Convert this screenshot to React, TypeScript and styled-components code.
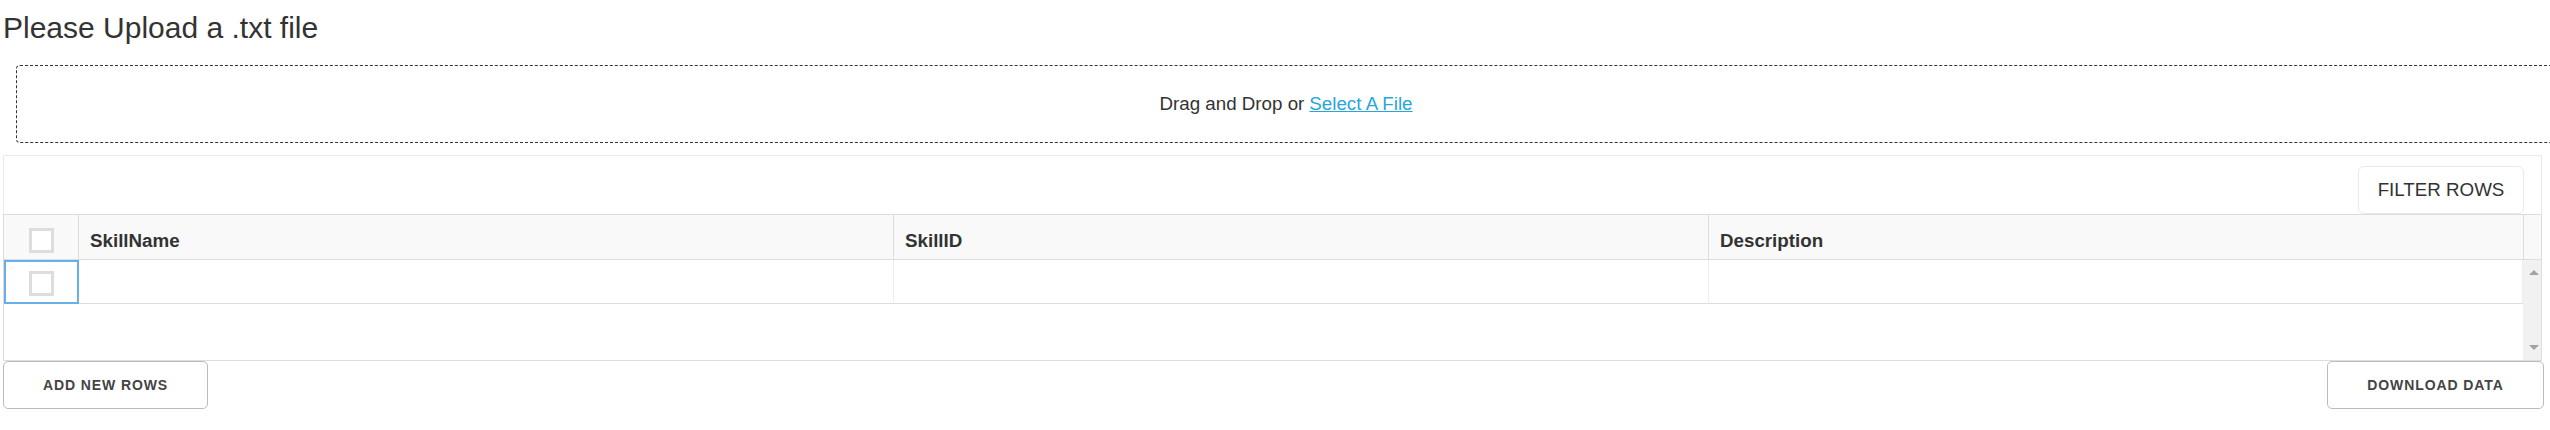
import React from 'react';
import styled, { createGlobalStyle } from 'styled-components';

const GlobalStyle = createGlobalStyle`
  html, body { margin: 0; padding: 0; background: #fff; overflow: hidden; }
  body { font-family: "Liberation Sans", Arial, sans-serif; color: #333; }
  *, *::before, *::after { box-sizing: border-box; }
`;

const Page = styled.div`
  width: 2550px;
  padding-left: 3px;
`;

const Title = styled.h1`
  margin: 0;
  padding-top: 11px;
  font-size: 30px;
  line-height: 34px;
  font-weight: 400;
  color: #333;
`;

const DropZone = styled.div`
  margin: 20px 0 0 13px;
  width: 2540px;
  height: 78px;
  border: 1px dashed #333;
  border-radius: 4px;
  display: flex;
  align-items: center;
  justify-content: center;
  font-size: 18.75px;
  color: #333;
`;

const FileLink = styled.a`
  margin-left: 5px;
  color: #27a6de;
  text-decoration: underline;
  cursor: pointer;
`;

const GridWrap = styled.div`
  margin-top: 12px;
  width: 2539px;
`;

const Toolbar = styled.div`
  display: flex;
  justify-content: flex-end;
  padding: 10px 17px 0 0;
  border: 1px solid #e7eaec;
  border-bottom: none;
`;

const ToolbarButton = styled.button`
  width: 166px;
  height: 48px;
  padding: 0;
  background: #fff;
  border: 1px solid #e7eaec;
  border-radius: 6px;
  font-family: inherit;
  font-size: 18.75px;
  color: #333;
`;

const Grid = styled.div`
  border: 1px solid #ddd;
`;

const HeaderRow = styled.div`
  display: flex;
  height: 45px;
  background: #f9f9f9;
  border-bottom: 1px solid #ddd;
`;

const HeaderCell = styled.div<{ $w?: number; $center?: boolean }>`
  flex: ${(p) => (p.$w ? `0 0 ${p.$w}px` : '1 1 auto')};
  display: flex;
  align-items: center;
  justify-content: ${(p) => (p.$center ? 'center' : 'flex-start')};
  padding: 7px 0 0 ${(p) => (p.$center ? 0 : 11)}px;
  border-right: ${(p) => (p.$w ? '1px solid #ddd' : 'none')};
  font-size: 18.75px;
  font-weight: 700;
  color: #333;
`;

const Body = styled.div`
  display: flex;
  height: 100px;
`;

const Canvas = styled.div`
  flex: 1 1 auto;
  background: #fff;
`;

const Row = styled.div`
  display: flex;
  height: 44px;
`;

const Cell = styled.div<{ $w?: number; $center?: boolean; $selected?: boolean }>`
  flex: ${(p) => (p.$w ? `0 0 ${p.$w}px` : '1 1 auto')};
  display: flex;
  align-items: center;
  justify-content: ${(p) => (p.$center ? 'center' : 'flex-start')};
  padding-top: 4px;
  border-right: 1px solid #eee;
  border-bottom: 1px solid #ddd;
  ${(p) => (p.$selected ? 'outline: 2px solid #66afe9; outline-offset: -2px;' : '')}
`;

const CheckBox = styled.span`
  display: inline-block;
  width: 25px;
  height: 25px;
  border: 3px solid #ddd;
  background: #fff;
`;

const ScrollBar = styled.div`
  flex: 0 0 18px;
  background: #f1f1f1;
  display: flex;
  flex-direction: column;
  justify-content: space-between;
  align-items: center;
  padding: 10px 0 10px 4px;
`;

const Arrow = styled.span<{ $down?: boolean }>`
  width: 0;
  height: 0;
  border-left: 5px solid transparent;
  border-right: 5px solid transparent;
  ${(p) => (p.$down ? 'border-top: 5px solid #a3a3a3;' : 'border-bottom: 5px solid #a3a3a3;')}
`;

const Footer = styled.div`
  display: flex;
  justify-content: space-between;
  width: 2541px;
`;

const ActionButton = styled.button<{ $w: number }>`
  width: ${(p) => p.$w}px;
  height: 48px;
  padding: 0;
  background: #fff;
  border: 1px solid #bbb;
  border-radius: 5px;
  font-family: inherit;
  font-size: 14px;
  font-weight: 700;
  letter-spacing: 0.9px;
  text-transform: uppercase;
  color: #444;
`;

const columns = ['SkillName', 'SkillID', 'Description'];

export default function App() {
  return (
    <Page>
      <GlobalStyle />
      <Title>Please Upload a .txt file</Title>
      <DropZone>
        Drag and Drop or<FileLink>Select A File</FileLink>
      </DropZone>
      <GridWrap>
        <Toolbar>
          <ToolbarButton>FILTER ROWS</ToolbarButton>
        </Toolbar>
        <Grid>
          <HeaderRow>
            <HeaderCell $w={75} $center>
              <CheckBox />
            </HeaderCell>
            {columns.map((c) => (
              <HeaderCell key={c} $w={815}>
                {c}
              </HeaderCell>
            ))}
            <HeaderCell />
          </HeaderRow>
          <Body>
            <Canvas>
              <Row>
                <Cell $w={75} $center $selected>
                  <CheckBox />
                </Cell>
                <Cell $w={815} />
                <Cell $w={815} />
                <Cell />
              </Row>
            </Canvas>
            <ScrollBar>
              <Arrow />
              <Arrow $down />
            </ScrollBar>
          </Body>
        </Grid>
      </GridWrap>
      <Footer>
        <ActionButton $w={205}>Add New Rows</ActionButton>
        <ActionButton $w={217}>Download Data</ActionButton>
      </Footer>
    </Page>
  );
}
